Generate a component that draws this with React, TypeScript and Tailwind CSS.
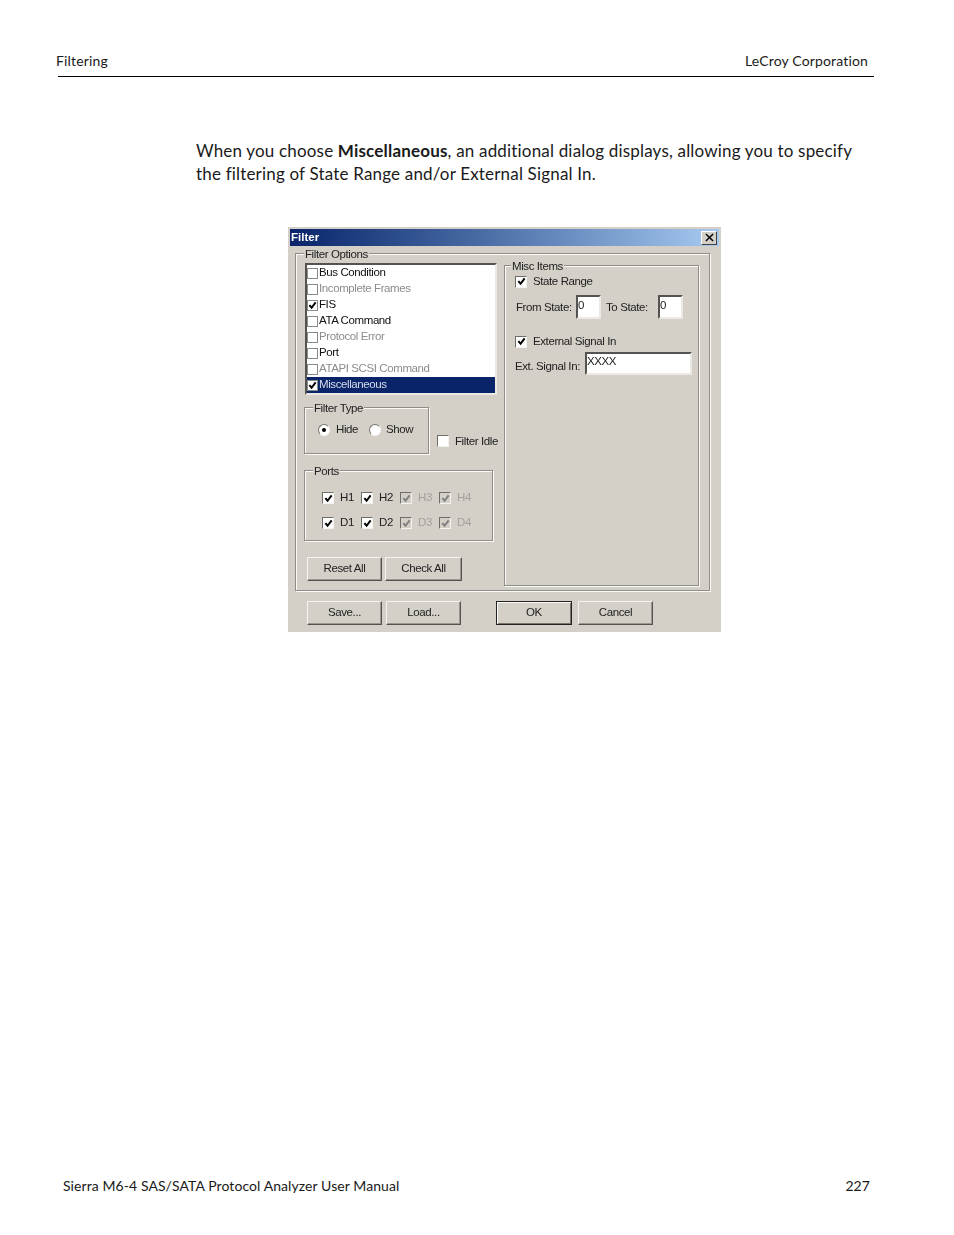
import type { ReactNode } from "react";

const bodyFont = "font-['Lato','Open_Sans',sans-serif]";

function Check({ checked, disabled, small }: { checked?: boolean; disabled?: boolean; small?: boolean }) {
  const color = disabled ? "#808080" : "#000";
  return (
    <span
      className={`flex shrink-0 items-center justify-center border ${
        small
          ? "size-[11px] border-[#8a8a86]"
          : "size-[12px] border-t-[#6f6d68] border-l-[#6f6d68] border-r-[#f4f3ef] border-b-[#f4f3ef]"
      } ${disabled ? "bg-[#d4d0c8]" : "bg-white"}`}
    >
      {checked ? (
        <svg viewBox="0 0 10 10" className="size-[9px]">
          <path d="M1.5 4.5 L4 7.5 L8.5 1.5" fill="none" stroke={color} strokeWidth="2.2" />
        </svg>
      ) : null}
    </span>
  );
}

function Radio({ checked }: { checked?: boolean }) {
  return (
    <span className="flex size-[12px] items-center justify-center rounded-full border border-t-[#77746e] border-l-[#77746e] border-r-[#f6f5f2] border-b-[#f6f5f2] bg-white">
      {checked ? <span className="size-[4px] rounded-full bg-black" /> : null}
    </span>
  );
}

function Group({
  label,
  className,
  legendClass,
  children,
}: {
  label: string;
  className: string;
  legendClass: string;
  children: ReactNode;
}) {
  return (
    <div className={`relative shrink-0 border border-[#8f8d88] shadow-[1px_1px_0_#fbfaf7,inset_1px_1px_0_#fbfaf7] ${className}`}>
      <span className={`absolute top-[-7px] bg-[#d4d0c8] px-px text-[11.5px] leading-[14px] text-[#222] ${legendClass}`}>
        {label}
      </span>
      {children}
    </div>
  );
}

function Btn({ label, className, strong }: { label: string; className: string; strong?: boolean }) {
  return (
    <div
      className={`flex h-[24px] items-center justify-center border text-[11.5px] text-[#222] ${
        strong
          ? "border-[#222] shadow-[inset_1px_1px_0_#fbfaf7,inset_-1px_-1px_0_#77746e]"
          : "border-t-[#f5f4f0] border-l-[#f5f4f0] border-r-[#55534f] border-b-[#55534f] shadow-[inset_-1px_-1px_0_#9a9791]"
      } ${className}`}
    >
      {label}
    </div>
  );
}

const listItems = [
  { label: "Bus Condition" },
  { label: "Incomplete Frames", dim: true },
  { label: "FIS", checked: true },
  { label: "ATA Command" },
  { label: "Protocol Error", dim: true },
  { label: "Port" },
  { label: "ATAPI SCSI Command", dim: true },
  { label: "Miscellaneous", checked: true, selected: true },
];

function PortCell({ label, dim }: { label: string; dim?: boolean }) {
  return (
    <div className="flex w-[39px] items-center gap-[6px]">
      <Check checked disabled={dim} />
      <span className={`text-[11.5px] ${dim ? "text-[#a3a19c]" : "text-[#222]"}`}>{label}</span>
    </div>
  );
}

function FilterDialog() {
  return (
    <div className="flex h-[405px] w-[433px] flex-col bg-[#d4d0c8] font-['Liberation_Sans',sans-serif] tracking-[-0.4px] blur-[0.4px]">
      <div className="mx-[2px] mt-[2px] flex h-[17px] items-center justify-between bg-gradient-to-r from-[#0a246a] to-[#a6caf0] pl-px pr-[2px]">
        <span className="text-[11.5px] font-bold tracking-normal text-white">Filter</span>
        <span className="flex h-[14px] w-[16px] items-center justify-center border border-t-white border-l-white border-r-[#404040] border-b-[#404040] bg-[#d4d0c8]">
          <svg viewBox="0 0 10 10" className="size-[9px]">
            <path d="M1 1 L9 9 M9 1 L1 9" stroke="#000" strokeWidth="1.6" />
          </svg>
        </span>
      </div>

      <Group
        label="Filter Options"
        className="mx-[7px] mt-[7px] flex h-[338px] w-[415px]"
        legendClass="left-[8px]"
      >
        <div className="ml-[9px] mt-[9px] flex w-[192px] shrink-0 flex-col">
          <div className="flex h-[132px] w-[192px] flex-col border-2 border-t-[#55534f] border-l-[#55534f] border-r-[#ece9e4] border-b-[#ece9e4] bg-white">
            {listItems.map((item) => (
              <div
                key={item.label}
                className={`flex h-[16px] shrink-0 items-center gap-px text-[11.5px] ${
                  item.selected
                    ? "bg-[#0a246a] text-[#d8dcea]"
                    : item.dim
                      ? "text-[#8c8c8c]"
                      : "text-[#111]"
                }`}
              >
                <Check checked={item.checked} small />
                {item.label}
              </div>
            ))}
          </div>

          <div className="ml-[-1px] mt-[12px] flex items-end">
            <Group label="Filter Type" className="h-[47px] w-[125px]" legendClass="left-[8px]">
              <div className="ml-[13px] mt-[13px] flex items-center text-[11.5px] text-[#222]">
                <Radio checked />
                <span className="ml-[6px] w-[33px]">Hide</span>
                <Radio />
                <span className="ml-[5px]">Show</span>
              </div>
            </Group>
            <div className="mb-[4px] ml-[8px] flex items-center gap-[6px] text-[11.5px] text-[#222]">
              <Check />
              <span className="whitespace-nowrap">Filter Idle</span>
            </div>
          </div>

          <Group label="Ports" className="ml-[-1px] mt-[16px] h-[71px] w-[189px]" legendClass="left-[8px]">
            <div className="ml-[17px] mt-[20px] flex flex-col gap-[11px]">
              <div className="flex h-[14px]">
                <PortCell label="H1" />
                <PortCell label="H2" />
                <PortCell label="H3" dim />
                <PortCell label="H4" dim />
              </div>
              <div className="flex h-[14px]">
                <PortCell label="D1" />
                <PortCell label="D2" />
                <PortCell label="D3" dim />
                <PortCell label="D4" dim />
              </div>
            </div>
          </Group>

          <div className="ml-[2px] mt-[16px] flex gap-[3px]">
            <Btn label="Reset All" className="w-[75px]" />
            <Btn label="Check All" className="w-[77px]" />
          </div>
        </div>

        <Group label="Misc Items" className="ml-[7px] mt-[11px] h-[321px] w-[195px]" legendClass="left-[6px]">
          <div className="ml-[10px] mt-[7px] flex items-center gap-[6px] text-[11.5px] text-[#222]">
            <Check checked />
            <span>State Range</span>
          </div>
          <div className="ml-[11px] mt-[5px] flex items-center text-[11.5px] text-[#222]">
            <span className="w-[60px]">From State:</span>
            <span className="h-[24px] w-[25px] border-2 border-t-[#55534f] border-l-[#55534f] border-r-[#ece9e4] border-b-[#ece9e4] bg-white leading-[16px]">0</span>
            <span className="ml-[5px] w-[52px]">To State:</span>
            <span className="h-[24px] w-[25px] border-2 border-t-[#55534f] border-l-[#55534f] border-r-[#ece9e4] border-b-[#ece9e4] bg-white leading-[16px]">0</span>
          </div>
          <div className="ml-[10px] mt-[14px] flex items-center gap-[6px] text-[11.5px] text-[#222]">
            <Check checked />
            <span>External Signal In</span>
          </div>
          <div className="ml-[10px] mt-px flex items-center text-[11.5px] text-[#222]">
            <span className="mt-[6px] w-[70px]">Ext. Signal In:</span>
            <span className="h-[23px] w-[107px] border-2 border-t-[#55534f] border-l-[#55534f] border-r-[#ece9e4] border-b-[#ece9e4] bg-white leading-[15px]">XXXX</span>
          </div>
        </Group>
      </Group>

      <div className="ml-[19px] mt-[10px] flex">
        <Btn label="Save..." className="w-[75px]" />
        <Btn label="Load..." className="ml-[4px] w-[75px]" />
        <Btn label="OK" className="ml-[35px] w-[76px]" strong />
        <Btn label="Cancel" className="ml-[6px] w-[75px]" />
      </div>
    </div>
  );
}

export default function App() {
  return (
    <div className={`flex h-[1235px] w-[954px] flex-col bg-white text-[#1a1a1a] ${bodyFont}`}>
      <header className="ml-[56px] mt-[52px] flex w-[818px] justify-between pb-[6px] pr-[6px] text-[14px] leading-[18px] tracking-[0.15px]">
        <span>Filtering</span>
        <span>LeCroy Corporation</span>
      </header>
      <div className="ml-[58px] h-px w-[816px] bg-black" />

      <p className="ml-[196px] mt-[63px] w-[680px] text-[17px] leading-[22.5px] tracking-[0.18px]">
        When you choose <b>Miscellaneous</b>, an additional dialog displays, allowing you to specify
        <br />
        the filtering of State Range and/or External Signal In.
      </p>

      <div className="ml-[288px] mt-[42px]">
        <FilterDialog />
      </div>

      <footer className="ml-[63px] mt-auto mb-[40px] flex w-[807px] justify-between text-[14px] leading-[18px] tracking-[0.08px]">
        <span>Sierra M6-4 SAS/SATA Protocol Analyzer User Manual</span>
        <span>227</span>
      </footer>
    </div>
  );
}
